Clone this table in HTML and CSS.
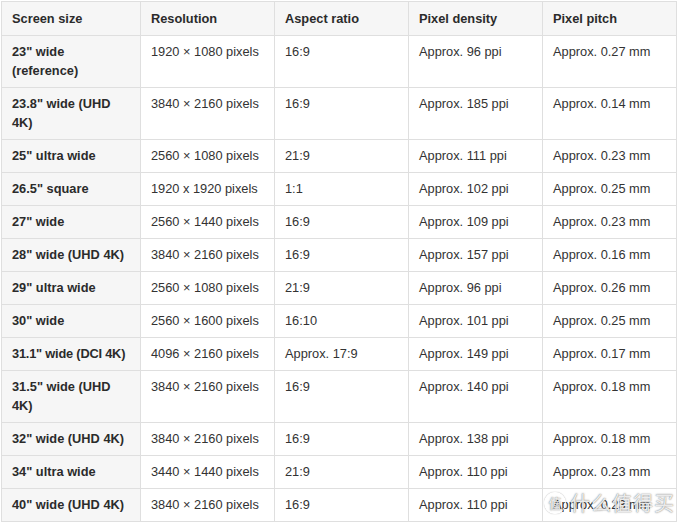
FILE: index.html
```html
<!DOCTYPE html>
<html>
<head>
<meta charset="utf-8">
<link rel="stylesheet" href="styles.css">
</head>
<body>
<div class="wrap">
<table class="specs">
<thead>
<tr><th>Screen size</th><th>Resolution</th><th>Aspect ratio</th><th>Pixel density</th><th>Pixel pitch</th></tr>
</thead>
<tbody>
<tr><th>23" wide (reference)</th><td>1920 × 1080 pixels</td><td>16:9</td><td>Approx. 96 ppi</td><td>Approx. 0.27 mm</td></tr>
<tr><th>23.8" wide (UHD 4K)</th><td>3840 × 2160 pixels</td><td>16:9</td><td>Approx. 185 ppi</td><td>Approx. 0.14 mm</td></tr>
<tr><th>25" ultra wide</th><td>2560 × 1080 pixels</td><td>21:9</td><td>Approx. 111 ppi</td><td>Approx. 0.23 mm</td></tr>
<tr><th>26.5" square</th><td>1920 x 1920 pixels</td><td>1:1</td><td>Approx. 102 ppi</td><td>Approx. 0.25 mm</td></tr>
<tr><th>27" wide</th><td>2560 × 1440 pixels</td><td>16:9</td><td>Approx. 109 ppi</td><td>Approx. 0.23 mm</td></tr>
<tr><th>28" wide (UHD 4K)</th><td>3840 × 2160 pixels</td><td>16:9</td><td>Approx. 157 ppi</td><td>Approx. 0.16 mm</td></tr>
<tr><th>29" ultra wide</th><td>2560 × 1080 pixels</td><td>21:9</td><td>Approx. 96 ppi</td><td>Approx. 0.26 mm</td></tr>
<tr><th>30" wide</th><td>2560 × 1600 pixels</td><td>16:10</td><td>Approx. 101 ppi</td><td>Approx. 0.25 mm</td></tr>
<tr><th class="nowrap">31.1" wide (DCI 4K)</th><td>4096 × 2160 pixels</td><td>Approx. 17:9</td><td>Approx. 149 ppi</td><td>Approx. 0.17 mm</td></tr>
<tr><th>31.5" wide (UHD 4K)</th><td>3840 × 2160 pixels</td><td>16:9</td><td>Approx. 140 ppi</td><td>Approx. 0.18 mm</td></tr>
<tr><th>32" wide (UHD 4K)</th><td>3840 × 2160 pixels</td><td>16:9</td><td>Approx. 138 ppi</td><td>Approx. 0.18 mm</td></tr>
<tr><th>34" ultra wide</th><td>3440 × 1440 pixels</td><td>21:9</td><td>Approx. 110 ppi</td><td>Approx. 0.23 mm</td></tr>
<tr><th>40" wide (UHD 4K)</th><td>3840 × 2160 pixels</td><td>16:9</td><td>Approx. 110 ppi</td><td>Approx. 0.23 mm</td></tr>
</tbody>
</table>
<div class="watermark"><span class="wm-badge">值</span><span class="wm-text">什么值得买</span></div>
</div>
</body>
</html>
```
FILE: styles.css
```css
html, body {
  margin: 0;
  padding: 0;
  background: #fff;
}
.wrap {
  position: relative;
  padding: 1px 0 0 1px;
  width: 676px;
}
.specs {
  border-collapse: collapse;
  width: 676px;
  table-layout: fixed;
  font-family: "Liberation Sans", Arial, sans-serif;
  font-size: 12.8px;
  line-height: 19px;
  color: #333;
}
.specs th, .specs td {
  border: 1px solid #dfdfdf;
  padding: 6px 10px 7px 10px;
  text-align: left;
  vertical-align: top;
}
.specs th {
  font-weight: bold;
  background: #f6f6f6;
  color: #2b2b2b;
}
.specs td {
  background: #fff;
}
.specs thead th {
  padding-top: 7px;
  padding-bottom: 7px;
}
.specs th:first-child { width: 118px; }
.specs th.nowrap {
  white-space: nowrap;
  letter-spacing: -0.2px;
}
.watermark {
  position: absolute;
  right: 2px;
  bottom: 5px;
  display: flex;
  align-items: center;
  gap: 4px;
  font-family: "Noto Sans CJK SC", sans-serif;
  color: rgba(255,255,255,0.85);
  text-shadow: 0 0 1px rgba(80,80,80,0.7), 0 0 2px rgba(80,80,80,0.4);
}
.wm-badge {
  width: 20px;
  height: 20px;
  border-radius: 50%;
  border: 1.5px solid rgba(255,255,255,0.85);
  box-shadow: 0 0 1px rgba(80,80,80,0.6);
  font-size: 13px;
  line-height: 20px;
  text-align: center;
}
.wm-text {
  font-size: 20px;
  letter-spacing: 1px;
}
```
